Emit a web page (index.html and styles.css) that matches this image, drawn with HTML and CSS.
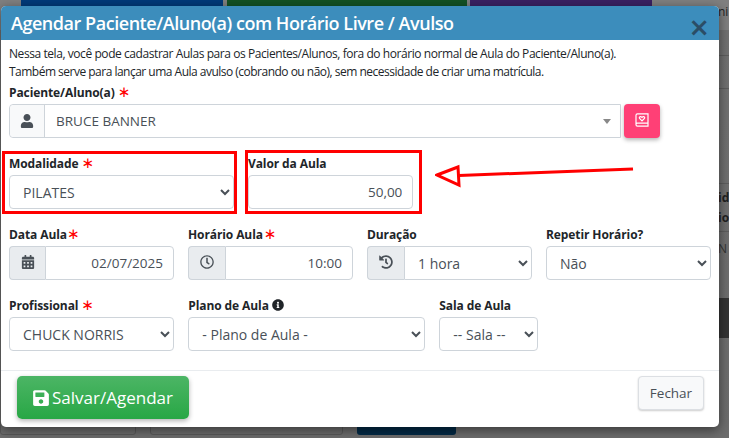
FILE: index.html
```html
<!DOCTYPE html>
<html lang="pt-BR">
  <head>
    <meta charset="UTF-8" />
    <title>Agendar Paciente</title>
    <link rel="stylesheet" href="styles.css">
  </head>
  <body>
    <div class="backdrop">
      <div class="cards">
        <div class="card card-blue"></div>
        <div class="card card-green"></div>
        <div class="card card-purple"></div>
      </div>
      <div class="side-line side-line-a"></div>
      <div class="side-line side-line-b"></div>
      <div class="side-line side-line-c"></div>
      <div class="side-line side-line-d"></div>
      <div class="side-text side-top">ni</div>
      <div class="side-text side-id">id</div>
      <div class="side-text side-io">io</div>
      <div class="side-text side-on">N</div>
      <div class="side-band"></div>
      <div class="under">
        <div class="under-input under-a"></div>
        <div class="under-input under-b"></div>
        <div class="under-btn"></div>
      </div>
    </div>

    <div class="modal">
      <div class="modal-header">
        <h2>Agendar Paciente/Aluno(a) com Horário Livre / Avulso</h2>
        <span class="close">×</span>
      </div>

      <div class="modal-body">
        <p class="intro">Nessa tela, você pode cadastrar Aulas para os Pacientes/Alunos, fora do horário normal de Aula do Paciente/Aluno(a).</p>
        <p class="intro intro-tight">Também serve para lançar uma Aula avulso (cobrando ou não), sem necessidade de criar uma matrícula.</p>

        <label class="lbl lbl-first">Paciente/Aluno(a) <span class="req">∗</span></label>
        <div class="patient-row">
          <div class="group patient">
            <span class="addon addon-light">
              <svg class="ico" viewBox="0 0 448 512"><path d="M224 256c70.7 0 128-57.3 128-128S294.7 0 224 0 96 57.3 96 128s57.3 128 128 128zm89.6 32h-16.7c-22.2 10.2-46.9 16-72.9 16s-50.6-5.8-72.9-16h-16.7C60.2 288 0 348.2 0 422.4V464c0 26.5 21.5 48 48 48h352c26.5 0 48-21.5 48-48v-41.6c0-74.2-60.2-134.4-134.4-134.4z"/></svg>
            </span>
            <span class="patient-name">BRUCE BANNER</span>
            <span class="caret"></span>
          </div>
          <button class="btn-book" type="button">
            <svg viewBox="0 0 14 14" width="14" height="14" fill="none" stroke="#fff" stroke-width="1.2"><path d="M13 .8H2.4Q1 .8 1 2.2v9.6q0 1.4 1.4 1.4H13zM1 11.6q0-1.4 1.4-1.4H13"/><path d="M7 7.8 4.6 5.4q-.7-1.2.4-1.7 1.1-.3 2 .7.9-1 2-.7 1.1.5.4 1.7z"/></svg>
          </button>
        </div>

        <div class="row">
          <div class="field w-modalidade">
            <label class="lbl">Modalidade <span class="req">∗</span></label>
            <select class="ctl"><option>PILATES</option></select>
          </div>
          <div class="field w-col">
            <label class="lbl">Valor da Aula</label>
            <input class="ctl txt-right" type="text" value="50,00" />
          </div>
        </div>

        <div class="row">
          <div class="field w-col">
            <label class="lbl">Data Aula<span class="req">∗</span></label>
            <div class="group">
              <span class="addon">
                <svg class="ico" viewBox="0 0 448 512"><path d="M0 464c0 26.5 21.5 48 48 48h352c26.5 0 48-21.5 48-48V192H0v272zm320-196c0-6.6 5.4-12 12-12h40c6.6 0 12 5.4 12 12v40c0 6.6-5.4 12-12 12h-40c-6.6 0-12-5.4-12-12v-40zm0 128c0-6.6 5.4-12 12-12h40c6.6 0 12 5.4 12 12v40c0 6.6-5.4 12-12 12h-40c-6.6 0-12-5.4-12-12v-40zM192 268c0-6.6 5.4-12 12-12h40c6.6 0 12 5.4 12 12v40c0 6.6-5.4 12-12 12h-40c-6.6 0-12-5.4-12-12v-40zm0 128c0-6.6 5.4-12 12-12h40c6.6 0 12 5.4 12 12v40c0 6.6-5.4 12-12 12h-40c-6.6 0-12-5.4-12-12v-40zM64 268c0-6.6 5.4-12 12-12h40c6.6 0 12 5.4 12 12v40c0 6.6-5.4 12-12 12H76c-6.6 0-12-5.4-12-12v-40zm0 128c0-6.6 5.4-12 12-12h40c6.6 0 12 5.4 12 12v40c0 6.6-5.4 12-12 12H76c-6.6 0-12-5.4-12-12v-40zM400 64h-48V16c0-8.8-7.2-16-16-16h-32c-8.8 0-16 7.2-16 16v48H160V16c0-8.8-7.2-16-16-16h-32c-8.8 0-16 7.2-16 16v48H48C21.5 64 0 85.5 0 112v48h448v-48c0-26.5-21.5-48-48-48z"/></svg>
              </span>
              <input class="ctl in-group txt-right" type="text" value="02/07/2025" />
            </div>
          </div>
          <div class="field w-col">
            <label class="lbl">Horário Aula<span class="req req-near">∗</span></label>
            <div class="group">
              <span class="addon addon-wide">
                <svg class="ico" viewBox="0 0 512 512"><path d="M256 8C119 8 8 119 8 256s111 248 248 248 248-111 248-248S393 8 256 8zm0 448c-110.5 0-200-89.5-200-200S145.5 56 256 56s200 89.5 200 200-89.5 200-200 200zm61.8-104.4l-84.9-61.7c-3.1-2.3-4.9-5.9-4.9-9.7V116c0-6.6 5.4-12 12-12h32c6.6 0 12 5.4 12 12v141.7l66.8 48.6c5.4 3.9 6.5 11.4 2.6 16.8L334.6 349c-3.9 5.3-11.4 6.5-16.8 2.6z"/></svg>
              </span>
              <input class="ctl in-group txt-right" type="text" value="10:00" />
            </div>
          </div>
          <div class="field w-col">
            <label class="lbl">Duração</label>
            <div class="group">
              <span class="addon addon-wide">
                <svg class="ico" viewBox="0 0 512 512"><path d="M504 255.531c.253 136.64-111.18 248.372-247.82 248.468-59.015.042-113.223-20.53-155.822-54.911-11.077-8.94-11.905-25.541-1.839-35.607l11.267-11.267c8.609-8.609 22.353-9.551 31.891-1.984C173.062 425.135 212.781 440 256 440c101.705 0 184-82.311 184-184 0-101.705-82.311-184-184-184-48.814 0-93.149 18.969-126.068 49.932l50.754 50.754c10.08 10.08 2.941 27.314-11.313 27.314H24c-8.837 0-16-7.163-16-16V38.627c0-14.254 17.234-21.393 27.314-11.314l49.372 49.372C129.209 34.136 189.552 8 256 8c136.81 0 247.747 110.78 248 247.531zm-180.912 78.784l9.823-12.63c8.138-10.463 6.253-25.542-4.21-33.679L288 256.349V152c0-13.255-10.745-24-24-24h-16c-13.255 0-24 10.745-24 24v135.651l65.409 50.874c10.463 8.137 25.541 6.253 33.679-4.21z"/></svg>
              </span>
              <select class="ctl in-group"><option>1 hora</option></select>
            </div>
          </div>
          <div class="field w-col">
            <label class="lbl">Repetir Horário?</label>
            <select class="ctl"><option>Não</option></select>
          </div>
        </div>

        <div class="row">
          <div class="field w-col">
            <label class="lbl">Profissional <span class="req">∗</span></label>
            <select class="ctl"><option>CHUCK NORRIS</option></select>
          </div>
          <div class="field w-plano">
            <label class="lbl">Plano de Aula
              <svg class="ico-info" viewBox="0 0 512 512"><path d="M256 8C119.043 8 8 119.083 8 256c0 136.997 111.043 248 248 248s248-111.003 248-248C504 119.083 392.957 8 256 8zm0 110c23.196 0 42 18.804 42 42s-18.804 42-42 42-42-18.804-42-42 18.804-42 42-42zm56 254c0 6.627-5.373 12-12 12h-88c-6.627 0-12-5.373-12-12v-24c0-6.627 5.373-12 12-12h12v-64h-12c-6.627 0-12-5.373-12-12v-24c0-6.627 5.373-12 12-12h64c6.627 0 12 5.373 12 12v100h12c6.627 0 12 5.373 12 12v24z"/></svg>
            </label>
            <select class="ctl"><option>- Plano de Aula -</option></select>
          </div>
          <div class="field w-sala">
            <label class="lbl">Sala de Aula</label>
            <select class="ctl"><option>-- Sala --</option></select>
          </div>
        </div>
      </div>

      <div class="modal-footer">
        <button class="btn-save" type="button">
          <svg viewBox="0 0 448 512" width="16" height="18" fill="#fff"><path d="M433.941 129.941l-83.882-83.882A48 48 0 0 0 316.118 32H48C21.49 32 0 53.49 0 80v352c0 26.51 21.49 48 48 48h352c26.51 0 48-21.49 48-48V163.882a48 48 0 0 0-14.059-33.941zM224 416c-35.346 0-64-28.654-64-64 0-35.346 28.654-64 64-64s64 28.654 64 64c0 35.346-28.654 64-64 64zm96-304.52V212c0 6.627-5.373 12-12 12H76c-6.627 0-12-5.373-12-12V108c0-6.627 5.373-12 12-12h228.52c3.183 0 6.235 1.264 8.485 3.515l3.48 3.48A11.996 11.996 0 0 1 320 111.48z"/></svg>Salvar/Agendar
        </button>
        <button class="btn-close" type="button">Fechar</button>
      </div>

      <!-- anotacoes em vermelho por cima do print -->
      <div class="mark mark-a"></div>
      <div class="mark mark-b"></div>
      <svg class="arrow" viewBox="0 0 200 24" width="200" height="24" fill="none" stroke="#f00" stroke-width="3">
        <path d="M198 5 24 11.5"/>
        <path d="M2 11 23 3 24 21z"/>
      </svg>
    </div>
  </body>
</html>
```

FILE: styles.css
```css
* {
  box-sizing: border-box;
}
html,
body {
  margin: 0;
  height: 100%;
}
body {
  position: relative;
  width: 729px;
  height: 438px;
  overflow: hidden;
  background: linear-gradient(#808080 0, #808080 30px, #727272 30px, #6d6d6d 100%);
  font-family: "Open Sans", "Noto Sans", sans-serif;
  color: #212529;
}

/* pagina escurecida atras do modal */
.backdrop {
  position: absolute;
  inset: 0;
}
.cards {
  display: flex;
  padding-left: 21px;
  height: 30px;
}
.card {
  height: 30px;
}
.card-blue {
  width: 202px;
  background-color: #003a7a;
  margin-right: 4px;
}
.card-green {
  width: 240px;
  background-color: #135224;
  margin-right: 3px;
}
.card-purple {
  width: 182px;
  background-color: #3a2163;
}
.side-line {
  position: absolute;
  left: 719px;
  width: 10px;
  height: 1px;
  background-color: #5e5e5e;
}
.side-line-a {
  top: 55px;
}
.side-line-b {
  top: 88px;
}
.side-line-c {
  top: 183px;
}
.side-line-d {
  top: 231px;
}
.side-text {
  position: absolute;
  left: 718px;
  font-size: 12px;
  color: #222;
}
.side-top {
  top: 3px;
}
.side-id {
  top: 189px;
  font-weight: 700;
}
.side-io {
  top: 209px;
  font-weight: 700;
}
.side-on {
  top: 240px;
  color: #333;
}
.side-band {
  position: absolute;
  left: 719px;
  top: 298px;
  width: 10px;
  height: 40px;
  background-color: #343434;
}
.under {
  position: absolute;
  top: 420px;
  left: 0;
  display: flex;
}
.under-input {
  height: 15px;
  border: 1px solid #5a5a5a;
  border-radius: 3px;
}
.under-a {
  width: 136px;
  margin-right: 14px;
}
.under-b {
  width: 193px;
  margin-right: 14px;
}
.under-btn {
  width: 99px;
  height: 15px;
  border-radius: 3px;
  background-color: #022a46;
}

.modal {
  position: absolute;
  left: 1px;
  top: 6px;
  width: 718px;
  height: 421px;
  background: #fff;
  border-radius: 5px;
  box-shadow: 0 3px 12px rgba(0, 0, 0, 0.5);
}
.modal-header {
  display: flex;
  align-items: center;
  justify-content: space-between;
  height: 34px;
  padding: 0 10px 0 10px;
  background-color: #3c8dbc;
  border-radius: 5px 5px 0 0;
}
.modal-header h2 {
  margin: 0;
  font-size: 18px;
  font-weight: 600;
  letter-spacing: -0.46px;
  color: #fff;
}
.close {
  margin-top: 8px;
  font-size: 34px;
  line-height: 1;
  font-weight: 600;
  color: #2b4d66;
}
.modal-body {
  padding: 5px 8px 0;
  height: 331px;
  border-bottom: 1px solid #e9ecef;
}
.intro {
  margin: 0;
  font-size: 12px;
  line-height: 18px;
  letter-spacing: -0.43px;
}
.intro-tight {
  letter-spacing: -0.51px;
}
.lbl {
  display: block;
  font-size: 12px;
  font-weight: 700;
  line-height: 18px;
  margin-bottom: 2px;
  letter-spacing: -0.1px;
}
.lbl-first {
  margin-top: 3px;
}
.req {
  color: #f00;
  font-family: "DejaVu Sans", sans-serif;
  font-size: 15px;
  font-weight: 400;
  line-height: 10px;
}
.req-near {
  margin-left: 1px;
}
.patient-row {
  display: flex;
  gap: 3px;
}
.group {
  display: flex;
  height: 34px;
}
.patient {
  flex: 0 0 612px;
  border: 1px solid #ced4da;
  border-radius: 4px 0 0 4px;
  align-items: center;
}
.addon {
  flex: none;
  display: flex;
  align-items: center;
  justify-content: center;
  width: 36px;
  height: 34px;
  padding-bottom: 2px;
  background-color: #e9ecef;
  border: 1px solid #ced4da;
  border-right: 0;
  border-radius: 4px 0 0 4px;
}
.addon-wide {
  width: 37px;
}
.addon-light {
  width: 35px;
  height: 32px;
  padding-bottom: 0;
  border: 0;
  border-right: 1px solid #ced4da;
  background-color: #f8f9fa;
}
.ico {
  width: 14px;
  height: 14px;
  fill: #495057;
}
.patient-name {
  flex: 1;
  padding-left: 11px;
  font-size: 13.5px;
  color: #495057;
}
.caret {
  margin-right: 9px;
  border-top: 5px solid #888;
  border-left: 4px solid transparent;
  border-right: 4px solid transparent;
}
.btn-book {
  width: 36px;
  height: 34px;
  padding: 0;
  border: 0;
  border-radius: 4px;
  background-color: #ff4076;
  box-shadow: 0 2px 4px rgba(0, 0, 0, 0.3);
}
.row {
  display: flex;
  gap: 14px;
  margin-top: 17px;
}
.w-modalidade {
  width: 225px;
}
.w-col {
  width: 165.33px;
}
.w-plano {
  width: 237px;
}
.w-sala {
  width: 99px;
}
.ctl {
  display: block;
  width: 100%;
  height: 34px;
  padding: 0 10px;
  border: 1px solid #ced4da;
  border-radius: 4px;
  background-color: #fff;
  font-family: inherit;
  font-size: 13.5px;
  color: #495057;
}
select.ctl {
  padding: 0 9px;
  font-size: 14px;
}
.in-group {
  flex: 1;
  min-width: 0;
  border-radius: 0 4px 4px 0;
}
.txt-right {
  text-align: right;
}
.ico-info {
  width: 12px;
  height: 12px;
  vertical-align: -1px;
  fill: #212529;
}
.modal-footer {
  display: flex;
  justify-content: space-between;
  align-items: flex-start;
  padding: 5px 15px 0 16px;
}
.btn-save {
  display: flex;
  align-items: center;
  gap: 3px;
  width: 172px;
  height: 43px;
  padding: 0 0 0 16px;
  border: 0;
  border-radius: 5px;
  background: linear-gradient(#4cb565, #28a745);
  box-shadow: 0 2px 5px rgba(0, 0, 0, 0.3);
  font-family: inherit;
  font-size: 17px;
  color: #fff;
}
.btn-close {
  width: 66px;
  height: 34px;
  padding: 0;
  border: 1px solid #dcdfe3;
  border-radius: 4px;
  background-color: #f8f9fa;
  box-shadow: 0 1px 2px rgba(0, 0, 0, 0.2);
  font-family: inherit;
  font-size: 13.5px;
  color: #495057;
}
.mark {
  position: absolute;
  border: 3px solid #f00;
}
.mark-a {
  left: 1px;
  top: 145px;
  width: 235px;
  height: 63px;
}
.mark-b {
  left: 244px;
  top: 144px;
  width: 177px;
  height: 64px;
}
.arrow {
  position: absolute;
  left: 434px;
  top: 158px;
}
```
